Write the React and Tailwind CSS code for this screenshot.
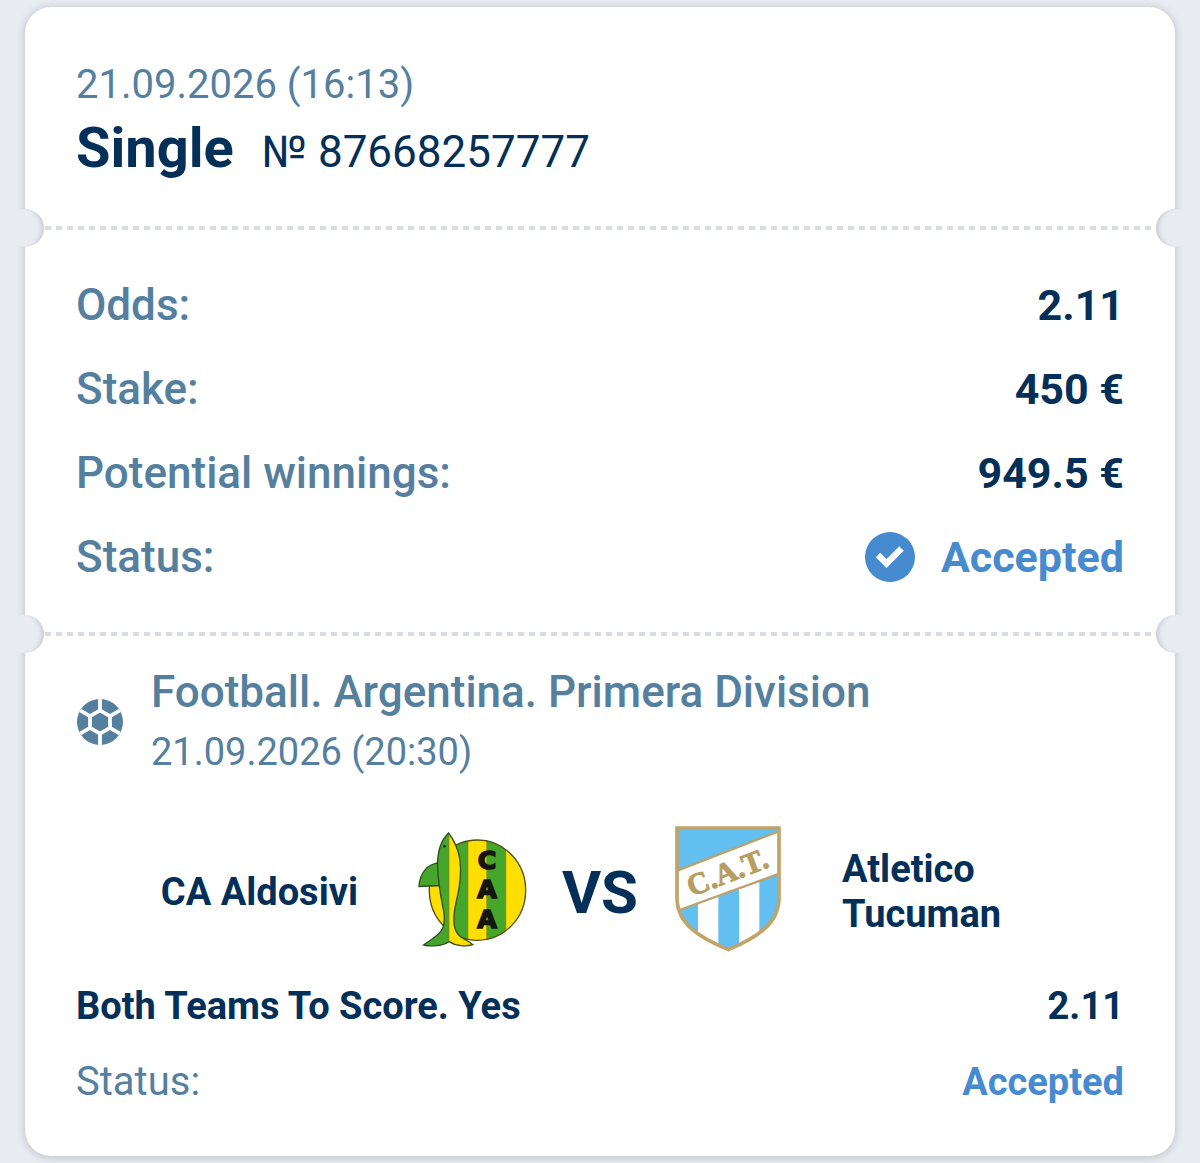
import React from "react";

const coupon = {
    date: "21.09.2026 (16:13)",
    type: "Single",
    number: "№ 87668257777",
    odds: "2.11",
    stake: "450 €",
    winnings: "949.5 €",
    status: "Accepted",
};

const event = {
    league: "Football. Argentina. Primera Division",
    date: "21.09.2026 (20:30)",
    home: "CA Aldosivi",
    away: "Atletico Tucuman",
    market: "Both Teams To Score. Yes",
    odds: "2.11",
    status: "Accepted",
};

const BallIcon = () => (
    <svg viewBox="0 0 48 48" className="h-12 w-12 shrink-0" aria-hidden="true">
        <defs>
            <clipPath id="ball">
                <circle cx="24" cy="24" r="23" />
            </clipPath>
        </defs>
        <g clipPath="url(#ball)">
            <rect width="48" height="48" fill="#557f9f" />
            <path
                d="M24 0V12.4M24 35.6V48M24 12.4L14 18.2V29.8L24 35.6L34 29.8V18.2ZM14 18.2L0 10M34 18.2L48 10M14 29.8L0 38M34 29.8L48 38"
                fill="none"
                stroke="#fff"
                strokeWidth="3.8"
            />
        </g>
    </svg>
);

const CheckIcon = () => (
    <svg viewBox="0 0 50 50" className="h-[50px] w-[50px]" aria-hidden="true">
        <circle cx="25" cy="25" r="25" fill="#468bd0" />
        <path
            d="M13 23L21.5 31.5L36.5 16.5"
            fill="none"
            stroke="#fff"
            strokeWidth="6.2"
        />
    </svg>
);

const SHARK =
    "M146 51C124 72 112 104 113 150C114 206 124 250 132 290C136 318 133 334 122 348C108 366 88 374 71 388C94 393 128 391 147 378C168 392 198 393 219 387C206 374 184 370 172 352C158 332 160 300 168 262C180 216 186 174 180 130C174 94 162 72 146 51Z";

const AldosiviLogo = () => (
    <svg
        viewBox="54 46 328 350"
        className="h-[117px] w-[109px]"
        role="img"
        aria-label="CA Aldosivi"
    >
        <defs>
            <clipPath id="aldosivi-disc">
                <ellipse cx="233" cy="223" rx="146" ry="152" />
            </clipPath>
            <clipPath id="shark-right">
                <rect x="147" y="40" width="90" height="360" />
            </clipPath>
        </defs>
        <g clipPath="url(#aldosivi-disc)">
            <rect x="80" y="60" width="310" height="330" fill="#ffde00" />
            <rect x="147" y="60" width="57" height="330" fill="#46a52b" />
            <rect x="261" y="60" width="57" height="330" fill="#46a52b" />
            <path
                d="M204 60V390M261 60V390M318 60V390"
                stroke="#7a7a17"
                strokeWidth="2"
            />
        </g>
        <ellipse
            cx="233"
            cy="223"
            rx="145"
            ry="151"
            fill="none"
            stroke="#4f4f1c"
            strokeWidth="4"
        />
        <path
            d="M116 141C84 144 59 170 57 212L122 209Z"
            fill="#46a52b"
            stroke="#2c4f1c"
            strokeWidth="4"
        />
        <path d={SHARK} fill="#46a52b" />
        <path d={SHARK} fill="#ffde00" clipPath="url(#shark-right)" />
        <path d={SHARK} fill="none" stroke="#2c4f1c" strokeWidth="4" />
        <path d="M147 58V378" stroke="#6d7a17" strokeWidth="2" />
        <circle cx="134" cy="91" r="4" fill="#1c2c12" />
        <g
            fill="#15150f"
            stroke="#15150f"
            strokeWidth="5"
            textAnchor="middle"
            className="font-['DejaVu_Sans'] text-[76px] font-bold"
        >
            <text x="262" y="159">
                C
            </text>
            <text x="262" y="248">
                A
            </text>
            <text x="262" y="337">
                A
            </text>
        </g>
    </svg>
);

const TucumanLogo = () => (
    <svg
        viewBox="46 35 318 378"
        className="h-[126px] w-[106px]"
        role="img"
        aria-label="Atletico Tucuman"
    >
        <defs>
            <clipPath id="tucuman-shield">
                <path d="M52 41H358V250C358 330 290 370 206 406C120 370 52 330 52 250Z" />
            </clipPath>
        </defs>
        <g clipPath="url(#tucuman-shield)">
            <rect x="46" y="35" width="318" height="378" fill="#62bff0" />
            <rect x="115" y="180" width="61" height="233" fill="#fff" />
            <rect x="238" y="180" width="61" height="233" fill="#fff" />
            <path
                d="M40 174L370 46V174L40 294Z"
                fill="#fff"
                stroke="#baa26c"
                strokeWidth="7"
            />
        </g>
        <path
            d="M52 41H358V250C358 330 290 370 206 406C120 370 52 330 52 250Z"
            fill="none"
            stroke="#c0a468"
            strokeWidth="11"
        />
        <text
            x="214"
            y="202"
            textAnchor="middle"
            transform="rotate(-21 214 202)"
            fill="#b89d62"
            stroke="#b89d62"
            strokeWidth="3"
            className="font-['Liberation_Serif'] text-[91px] font-bold"
        >
            C.A.T.
        </text>
    </svg>
);

// Perforated line with a round cut on each edge of the ticket
const TearLine = () => (
    <div className="relative h-0">
        <div className="absolute inset-x-5 -top-0.5 h-1 bg-[repeating-linear-gradient(90deg,#dadce4_0_6px,transparent_6px_11px)]" />
        <div className="absolute -left-[19px] -top-[19px] h-[38px] w-[38px] rounded-full bg-[#e9edf2] shadow-[inset_-6px_0_5px_-4px_#c3c7ce]" />
        <div className="absolute -right-[19px] -top-[19px] h-[38px] w-[38px] rounded-full bg-[#e9edf2] shadow-[inset_6px_0_5px_-4px_#c3c7ce]" />
    </div>
);

const Row = ({ label, children }) => (
    <div className="flex h-[84px] items-center justify-between">
        <dt className="text-[44px] font-medium text-[#557f9f]">{label}</dt>
        <dd className="flex items-center gap-[26px] text-[43px] font-bold">
            {children}
        </dd>
    </div>
);

const App = () => {
    return (
        <main className="min-h-screen bg-[#e9edf2] px-[25px] py-[7px] font-['Roboto',sans-serif] text-[#032f59]">
            <article className="rounded-[26px] bg-white shadow-[0_1px_8px_1px_#bfc3ca]">
                <header className="px-[51px] pt-[53px] pb-[38px]">
                    <p className="text-[40px] leading-[50px] text-[#557f9f]">
                        {coupon.date}
                    </p>
                    <div className="flex items-baseline gap-7 leading-[76px]">
                        <h1 className="text-[56px] font-bold">{coupon.type}</h1>
                        <span className="text-[44px]">{coupon.number}</span>
                    </div>
                </header>
                <TearLine />
                <dl className="px-[51px] py-[35px]">
                    <Row label="Odds:">{coupon.odds}</Row>
                    <Row label="Stake:">{coupon.stake}</Row>
                    <Row label="Potential winnings:">{coupon.winnings}</Row>
                    <Row label="Status:">
                        <CheckIcon />
                        <span className="text-[#468bd0]">{coupon.status}</span>
                    </Row>
                </dl>
                <TearLine />
                <section className="px-[51px] pt-[28px] pb-12">
                    <div className="flex items-center gap-[27px] leading-[60px] text-[#557f9f]">
                        <BallIcon />
                        <div>
                            <h2 className="text-[44px] font-medium">
                                {event.league}
                            </h2>
                            <p className="text-[38px]">{event.date}</p>
                        </div>
                    </div>
                    <div className="mt-[46px] grid grid-cols-[1fr_128px_128px_128px_1fr] items-center text-[38px] leading-[45px] font-bold">
                        <p className="pr-[50px] text-right">{event.home}</p>
                        <div className="flex h-32 items-center justify-center pb-1.5">
                            <AldosiviLogo />
                        </div>
                        <p className="text-center text-[60px]">VS</p>
                        <div className="flex h-32 items-center justify-center pb-1.5">
                            <TucumanLogo />
                        </div>
                        <p className="max-w-[250px] pl-[50px]">{event.away}</p>
                    </div>
                    <div className="mt-[24px] flex justify-between text-[38px] leading-[52px] font-bold">
                        <p>{event.market}</p>
                        <p>{event.odds}</p>
                    </div>
                    <div className="mt-[24px] flex justify-between leading-[52px]">
                        <p className="text-[40px] text-[#557f9f]">Status:</p>
                        <p className="text-[38px] font-bold text-[#468bd0]">
                            {event.status}
                        </p>
                    </div>
                </section>
            </article>
        </main>
    );
};

export default App;
